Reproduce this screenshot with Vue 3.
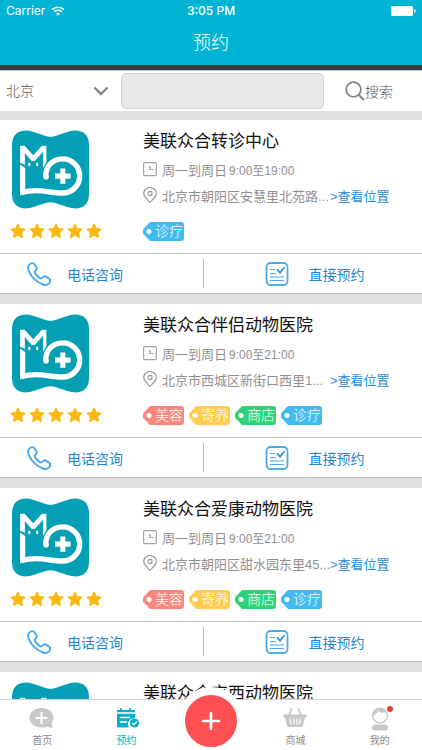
<script setup>
import { ref } from 'vue'

const city = ref('北京')
const keyword = ref('')

const tagColors = { 美容: 'red', 寄养: 'yellow', 商店: 'green', 诊疗: 'blue' }
const allTags = ['美容', '寄养', '商店', '诊疗']

const clinics = [
  { name: '美联众合转诊中心', days: '周一到周日', hours: '9:00至19:00', address: '北京市朝阳区安慧里北苑路...', tags: ['诊疗'] },
  { name: '美联众合伴侣动物医院', days: '周一到周日', hours: '9:00至21:00', address: '北京市西城区新街口西里1...', tags: allTags },
  { name: '美联众合爱康动物医院', days: '周一到周日', hours: '9:00至21:00', address: '北京市朝阳区甜水园东里45...', tags: allTags },
  { name: '美联众合京西动物医院', days: '', hours: '', address: '', tags: [] },
]
</script>

<template>
  <div class="app">
    <header class="top">
      <div class="status">
        <span class="carrier">
          Carrier
          <svg class="wifi" viewBox="0 0 14 10" aria-hidden="true">
            <path d="M1 3.6a8.6 8.6 0 0 1 12 0M3.1 5.8a5.6 5.6 0 0 1 7.8 0" fill="none" stroke="#fff" stroke-width="1.5" />
            <path d="M4.9 7.6a3 3 0 0 1 4.2 0L7 9.8z" fill="#fff" />
          </svg>
        </span>
        <span class="time">3:05 PM</span>
        <svg class="battery" viewBox="0 0 25 10" aria-hidden="true">
          <rect width="22" height="10" rx="1.5" fill="#fff" />
          <path d="M23 3.2c2 .4 2 3.2 0 3.6z" fill="#fff" />
        </svg>
      </div>
      <h1>预约</h1>
    </header>

    <form class="search" @submit.prevent>
      <label class="city">
        <select v-model="city" aria-label="城市">
          <option>北京</option>
        </select>
        <svg viewBox="0 0 16 10" aria-hidden="true">
          <path d="M1.5 1.5 8 8l6.500-6.500" fill="none" stroke="#858585" stroke-width="2.4" />
        </svg>
      </label>
      <input v-model="keyword" class="field" type="text" aria-label="搜索" />
      <button class="go" type="submit">
        <svg viewBox="0 0 20 20" aria-hidden="true">
          <circle cx="8.5" cy="8.5" r="7.4" fill="none" stroke="#858585" stroke-width="1.8" />
          <path d="m13.6 13.8 5.400 5.200" stroke="#858585" stroke-width="2" />
        </svg>
        搜索
      </button>
    </form>

    <main class="list">
      <article v-for="clinic in clinics" :key="clinic.name" class="card">
        <div class="info">
          <div class="brand">
            <svg class="logo" viewBox="0 0 78 79" role="img" aria-label="美联众合">
              <path d="M13 0Q18 0 22 1.500L35 5.800Q39 7 43 5.800L56 1.500Q60 0 65 0Q78 1 78 15V64Q78 78 65 79Q60 79 56 77.500L43 73.200Q39 72 35 73.200L22 77.500Q18 79 13 79Q0 78 0 64V15Q0 1 13 0z" fill="#059fb5" />
              <path d="M8.200 32.500V15.500h4.600L21.500 25l8.800-9.500h4.500V32l-3.300 6V21.500L23 30.800h-3l-7-8V35z" fill="#fff" />
              <path d="M8.200 34.500 13.400 38v21.500l-5.200 6.700z" fill="#fff" />
              <path d="M34.500 47.500C33 37 41 28.700 51.300 28.700a17.300 17.300 0 0 1 0 34.600C37 63.500 28 58 9 63" fill="none" stroke="#fff" stroke-width="5.400" />
              <circle cx="34.500" cy="47" r="2.700" fill="#fff" />
              <path d="M51.500 38.500v15.500M43.700 46.200h15.600" stroke="#fff" stroke-width="5.200" />
              <ellipse cx="17.500" cy="34.200" rx="1.200" ry="1.900" fill="#fff" />
              <ellipse cx="25.500" cy="34.200" rx="1.200" ry="1.900" fill="#fff" />
            </svg>
            <div class="stars" role="img" aria-label="5星">
              <svg v-for="n in 5" :key="n" viewBox="0 0 16 16">
                <path d="M8 1.200l2 4.400 4.900.5-3.600 3.300 1 4.900L8 11.900l-4.300 2.400 1-4.900L1.100 6.100 6 5.600z" fill="#fdb913" stroke="#fdb913" stroke-width="1.400" stroke-linejoin="round" />
              </svg>
            </div>
          </div>
          <div class="detail">
            <h2>{{ clinic.name }}</h2>
            <template v-if="clinic.hours">
              <p class="line">
                <svg viewBox="0 0 14 16" aria-hidden="true">
                  <rect x=".6" y="1.600" width="12.800" height="13" rx="1.200" fill="none" stroke="#a3a3a3" stroke-width="1.200" />
                  <path d="M7 5v3.500h3.500" fill="none" stroke="#a3a3a3" stroke-width="1.200" />
                </svg>
                <span>{{ clinic.days }}</span>
                <span class="hours">{{ clinic.hours }}</span>
              </p>
              <p class="line">
                <svg viewBox="0 0 14 16" aria-hidden="true">
                  <path d="M7 15.400C3.500 11.800.7 9.700.7 6.600a6.300 6.100 0 0 1 12.600 0c0 3.100-2.800 5.200-6.300 8.800z" fill="none" stroke="#999" stroke-width="1.200" />
                  <circle cx="7" cy="6.400" r="2" fill="none" stroke="#999" stroke-width="1.200" />
                </svg>
                <span class="address">{{ clinic.address }}</span>
                <a href="#map">&gt;查看位置</a>
              </p>
              <ul class="tags">
                <li v-for="tag in clinic.tags" :key="tag" :class="tagColors[tag]">{{ tag }}</li>
              </ul>
            </template>
          </div>
        </div>
        <div v-if="clinic.hours" class="actions">
          <a href="#call">
            <svg viewBox="0 0 24 24" aria-hidden="true">
              <path d="M2.200 2.600C4 .8 6.200.6 7.400 2.400l2 3c.8 1.400.2 2.400-1.200 3.600-.8.8-.6 1.600 0 2.600 1.200 1.800 2.600 3.200 4.400 4.400 1 .6 1.800.6 2.600-.2 1.200-1.400 2.400-2 3.800-1.200l3 2c1.800 1.200 1.600 3.200-.2 5-2.800 2.800-8.600 1-14-4.200C2.200 12-.6 5.600 2.200 2.600z" fill="none" stroke="#4aa9ea" stroke-width="1.900" />
            </svg>
            <span>电话咨询</span>
          </a>
          <a href="#book">
            <svg viewBox="0 0 24 24" aria-hidden="true">
              <rect x="1.500" y="1" width="21" height="22" rx="4" fill="none" stroke="#4aa9ea" stroke-width="1.800" />
              <path d="M5 7.500h5M5 11.500h6M5 15h14M5 18.500h14" stroke="#4aa9ea" stroke-width="1.200" />
              <path d="m12 7.500 3 3.200L19.500 5.500" fill="none" stroke="#2f8fd6" stroke-width="1.800" />
            </svg>
            <span>直接预约</span>
          </a>
        </div>
      </article>
    </main>

    <nav class="tabs">
      <a href="#home">
        <svg viewBox="0 0 26 22" aria-hidden="true">
          <path d="M12.500 1C19 1 24.500 5.200 24.500 10.800c0 2.400-.8 4-2 5.600.2 1.600 1 3 2 4.200-2.400.2-4.600-.2-6.200-1.200-1.800.8-3.800 1.200-5.800 1.200C5.800 20.600.5 16.400.5 10.800S5.800 1 12.500 1z" fill="#c8c8c8" />
          <path d="M12.500 5v12M6.500 11h12" stroke="#fff" stroke-width="2" />
        </svg>
        首页
      </a>
      <a href="#booking" class="active">
        <svg viewBox="0 0 26 22" aria-hidden="true">
          <path d="M3 3h3V1.200h2V3h7V1.200h2V3h4v8.500a5.800 5.800 0 0 0-6 9H4.500A1.500 1.500 0 0 1 3 19z" fill="#0bb0c8" />
          <path d="M3 6h18M6 10.500h10M6 15h7" stroke="#fff" stroke-width="1.400" />
          <circle cx="20.500" cy="16" r="4.600" fill="#0bb0c8" />
          <path d="m18.200 16 1.700 1.800 3-3.400" fill="none" stroke="#fff" stroke-width="1.200" />
        </svg>
        预约
      </a>
      <div class="center">
        <button type="button" aria-label="添加">
          <svg viewBox="0 0 20 20" aria-hidden="true">
            <path d="M10 2v16M2 10h16" stroke="#fff" stroke-width="2.600" stroke-linecap="round" />
          </svg>
        </button>
      </div>
      <a href="#shop">
        <svg viewBox="0 0 26 22" aria-hidden="true">
          <path d="M6.500 9 9.500 2M19.500 9l-3-7" stroke="#c8c8c8" stroke-width="1.800" stroke-linecap="round" />
          <path d="M2 7.500h22c1 0 1 3 0 3h-1L21 18.500c-.3 1-1 1.500-2 1.500H7c-1 0-1.700-.5-2-1.500L3 10.500H2c-1 0-1-3 0-3z" fill="#c8c8c8" />
          <path d="m8 11.500 1 6M12 11.500v6M15 11.500v6M18.500 11.500l-1 6" stroke="#fff" stroke-width="1.200" />
        </svg>
        商城
      </a>
      <a href="#me">
        <span class="avatar">
          <svg viewBox="0 0 26 24" aria-hidden="true">
            <circle cx="13" cy="8.500" r="7.400" fill="#fff" stroke="#c8c8c8" stroke-width="1.400" />
            <path d="M5.600 9C5 4 8.500 1 13 1s8 3 7.400 8c-.4-2-1.600-3.400-3.400-3.400-2.600.2-4.600-.4-6-1.800-.6 2.400-2.600 4-5.400 5.200z" fill="#c8c8c8" />
            <rect x="5" y="17.500" width="16" height="6" rx="3" fill="#c8c8c8" />
          </svg>
          <i class="dot"></i>
        </span>
        我的
      </a>
    </nav>
  </div>
</template>

<style>
body {
  background: #e2e2e2;
}
</style>

<style scoped>
* {
  box-sizing: border-box;
}
.app {
  display: flex;
  flex-direction: column;
  height: 100vh;
  overflow: hidden;
  font-family: "Liberation Sans", "Noto Sans CJK SC", sans-serif;
  font-weight: 400;
}
h1, h2, p, ul {
  margin: 0;
  padding: 0;
  font-weight: 400;
}
a {
  text-decoration: none;
}
svg {
  display: block;
  flex: none;
}
.top {
  flex: none;
  background: #00b5d3;
  color: #fff;
  border-bottom: 5px solid #35383f;
}
.status {
  display: grid;
  grid-template-columns: 1fr auto 1fr;
  align-items: center;
  height: 21px;
  padding: 0 6px;
  font: 400 12px Inter, sans-serif;
}
.carrier {
  display: flex;
  align-items: center;
  gap: 6px;
}
.wifi {
  width: 14px;
  height: 10px;
}
.time {
  font-weight: 500;
}
.battery {
  width: 25px;
  height: 10px;
  justify-self: end;
}
h1 {
  height: 44px;
  font-size: 18px;
  font-weight: 300;
  line-height: 44px;
  text-align: center;
}
.search {
  flex: none;
  display: flex;
  align-items: center;
  height: 41px;
  background: #fff;
  border-top: 1px solid #c4c4c8;
  font-weight: 300;
}
.city {
  flex: none;
  display: flex;
  align-items: center;
  width: 121px;
  padding: 0 12px 0 6px;
}
.city select {
  flex: 1;
  min-width: 0;
  padding: 0;
  border: 0;
  appearance: none;
  background: none;
  color: #555;
  font: inherit;
  font-size: 14px;
}
.city svg {
  width: 16px;
  height: 10px;
}
.field {
  flex: 1;
  min-width: 0;
  height: 36px;
  padding: 0 10px;
  border: 1px solid #d2d2d2;
  border-radius: 5px;
  background: #e8e8e8;
  font: inherit;
  font-size: 14px;
}
.go {
  flex: none;
  display: flex;
  align-items: center;
  width: 98px;
  padding: 0 0 0 21px;
  border: 0;
  background: none;
  color: #555;
  font: inherit;
  font-size: 14px;
}
.go svg {
  width: 20px;
  height: 20px;
}
.list {
  flex: 1;
  min-height: 0;
  overflow-y: auto;
  scrollbar-width: none;
  display: flex;
  flex-direction: column;
  gap: 10px;
  padding-top: 9px;
}
.card {
  flex: none;
  background: #fff;
  border-bottom: 1px solid #bbb;
}
.info {
  display: flex;
  height: 133px;
}
.brand {
  flex: none;
  width: 143px;
  padding: 10px 0 0 12px;
}
.logo {
  width: 77px;
  height: 79px;
}
.stars {
  display: flex;
  gap: 3px;
  margin: 14px 0 0 -2px;
}
.stars svg {
  width: 16px;
  height: 16px;
}
.detail {
  flex: 1;
  min-width: 0;
  padding-top: 10px;
}
h2 {
  color: #111;
  font-size: 17px;
  font-weight: 400;
  line-height: 24px;
  margin-bottom: 2px;
}
.line {
  display: flex;
  align-items: center;
  height: 26px;
  color: #909090;
  font-size: 13px;
  white-space: nowrap;
}
.line svg {
  width: 14px;
  height: 16px;
  margin-right: 5px;
}
.hours {
  margin-left: 2px;
  font-size: 12px;
}
.address {
  width: 168px;
}
.line a {
  color: #2b8fd2;
}
.tags {
  display: flex;
  gap: 5px;
  margin-top: 14px;
  list-style: none;
}
.tags li {
  width: 41px;
  height: 19px;
  padding-left: 12px;
  border-radius: 3px;
  clip-path: polygon(0 40%, 7px 0, 100% 0, 100% 100%, 7px 100%, 0 60%);
  color: #fff;
  font-size: 14px;
  font-weight: 300;
  line-height: 19px;
}
.red { background: radial-gradient(circle at 6px 50%, #fff 2px, #f9877e 3px); }
.yellow { background: radial-gradient(circle at 6px 50%, #fff 2px, #fecd51 3px); }
.green { background: radial-gradient(circle at 6px 50%, #fff 2px, #2ed477 3px); }
.blue { background: radial-gradient(circle at 6px 50%, #fff 2px, #41bbef 3px); }
.actions {
  display: flex;
  height: 40px;
  padding: 5px 0;
  border-top: 1px solid #c4c4c4;
}
.actions a {
  display: flex;
  align-items: center;
  gap: 16px;
  color: #2387cc;
  font-size: 14px;
}
.actions a:first-child {
  width: 48%;
  padding-left: 27px;
}
.actions a:last-child {
  flex: 1;
  padding-left: 61px;
  gap: 20px;
  border-left: 1px solid #bbb;
}
.actions svg {
  width: 24px;
  height: 24px;
}
.tabs {
  flex: none;
  display: grid;
  grid-template-columns: repeat(5, 1fr);
  position: relative;
  height: 51px;
  background: #fff;
  border-top: 1px solid #d2d2d2;
}
.tabs > a {
  display: flex;
  flex-direction: column;
  align-items: center;
  justify-content: space-between;
  padding: 7px 0 2px;
  color: #8a8a8a;
  font-size: 10px;
  line-height: 14px;
}
.tabs svg {
  width: 26px;
  height: 22px;
}
.tabs .active {
  color: #0bb0c8;
}
.center {
  display: flex;
  justify-content: center;
}
.center button {
  position: absolute;
  top: -13px;
  display: grid;
  place-items: center;
  width: 68px;
  height: 68px;
  padding: 0;
  border: 8px solid #fff;
  border-radius: 50%;
  background: #ff5053;
}
.center svg {
  width: 20px;
  height: 20px;
}
.avatar {
  position: relative;
}
.avatar svg {
  height: 24px;
}
.dot {
  position: absolute;
  top: -1px;
  right: 0;
  width: 6px;
  height: 6px;
  border-radius: 50%;
  background: #e5403c;
}
</style>
